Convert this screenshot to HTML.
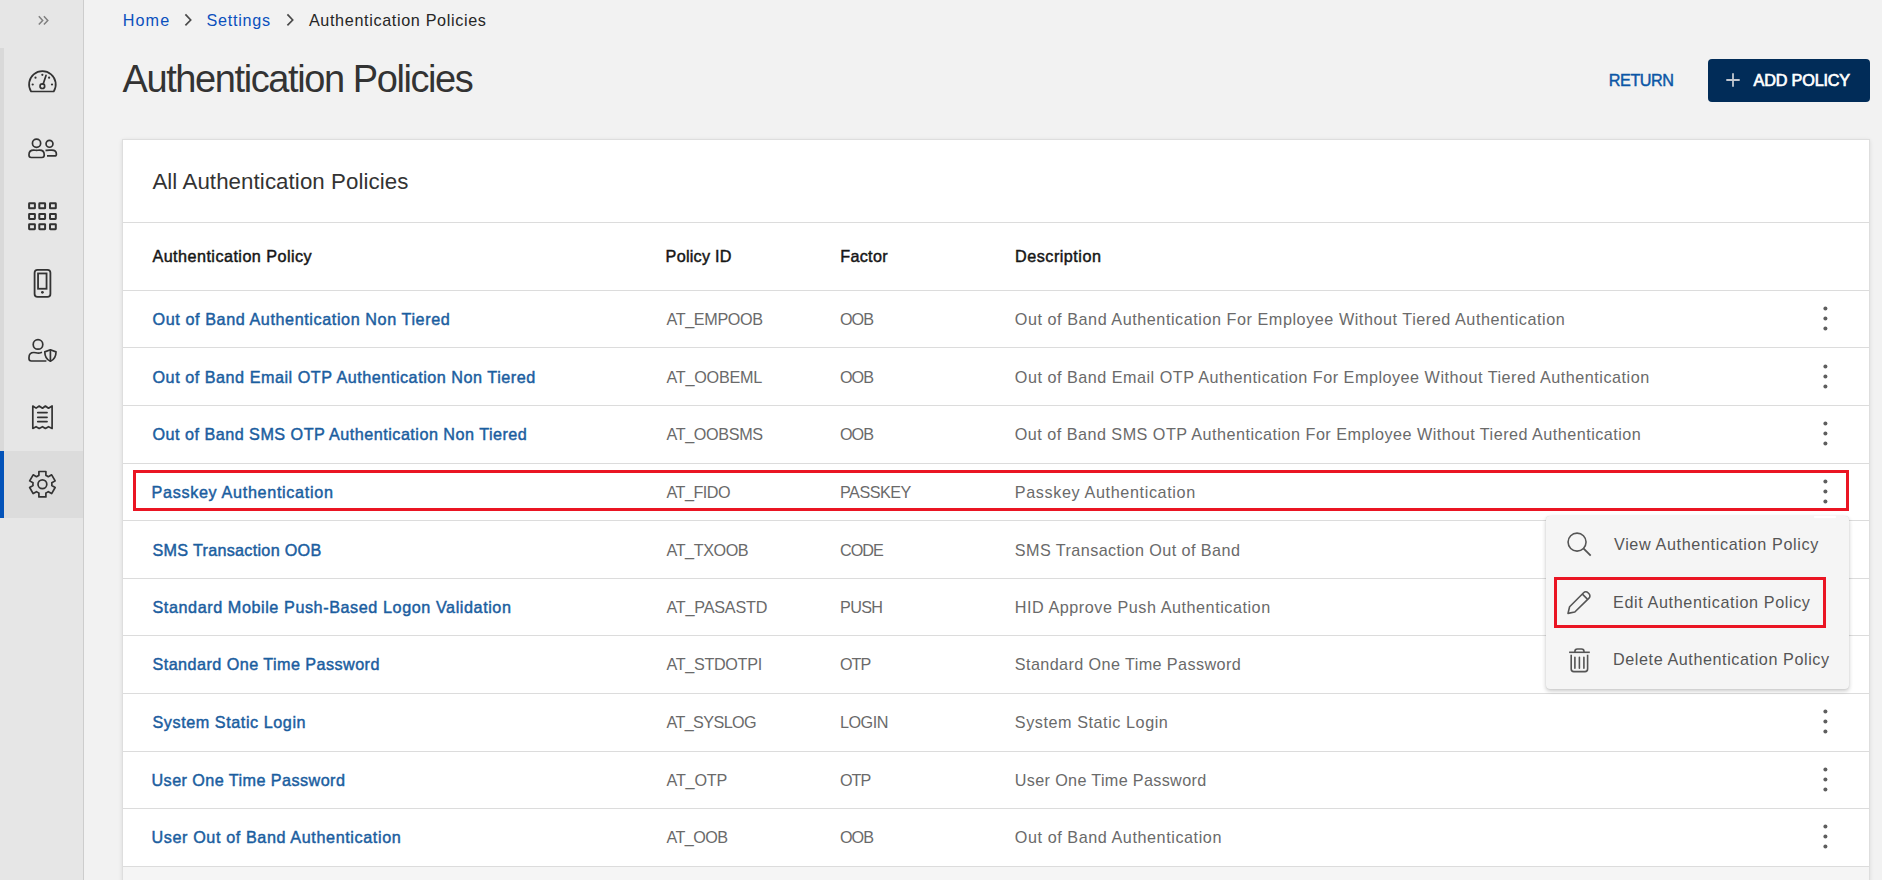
<!DOCTYPE html>
<html><head><meta charset="utf-8">
<style>
*{box-sizing:border-box;margin:0;padding:0}
html,body{width:1882px;height:880px;overflow:hidden;background:#f2f2f2;font-family:"Liberation Sans",sans-serif;position:relative}
.abs{position:absolute}
.t{position:absolute;white-space:nowrap;line-height:40px}
#side{position:absolute;left:0;top:0;width:84px;height:880px;background:#e6e6e6;border-right:1px solid #cdcdcd}
#strip{position:absolute;left:0;top:48px;width:4px;height:403px;background:#d9d9d9}
#sel{position:absolute;left:0;top:451px;width:83px;height:67px;background:#dcdcdc}
#selbar{position:absolute;left:0;top:451px;width:4px;height:67px;background:#0353b9}
.ico{position:absolute;overflow:visible}
#add{position:absolute;left:1708px;top:59px;width:162px;height:43px;background:#012c58;border-radius:4px}
#card{position:absolute;left:122px;top:139px;width:1748px;height:760px;background:#fff;border:1px solid #dedede;box-shadow:0 1px 4px rgba(0,0,0,.10)}
.hline{position:absolute;left:123px;width:1746px;height:1px;background:#dcdcdc}
.dots{position:absolute;left:1823px;width:4px}
.dots i{display:block;width:4px;height:4px;border-radius:2px;background:#676767;margin-bottom:6px}
#menu{position:absolute;left:1546px;top:516px;width:303px;height:173px;background:#f5f5f5;border-radius:4px;box-shadow:0 2px 4px rgba(0,0,0,.22),0 0 1px rgba(0,0,0,.15)}
.red{position:absolute;border:3px solid #ea1523}
</style></head><body>
<div id="side"></div>
<div id="strip"></div>
<div id="sel"></div>
<div id="selbar"></div>
<svg class="ico" style="left:36px;top:13px" width="16" height="15" viewBox="0 0 16 15"><path d="M2.8 3.2L6.7 7.4L2.8 11.6M7.9 3.2L11.8 7.4L7.9 11.6" fill="none" stroke="#808080" stroke-width="1.5"/></svg>
<svg class="ico" style="left:26px;top:66px" width="32" height="30" viewBox="0 0 32 30"><g fill="none" stroke="#333" stroke-width="1.7" stroke-linecap="round" stroke-linejoin="round"><path d="M5.09 25.5 A13.35 13.35 0 1 1 27.71 25.5 Z"/><circle cx="16.35" cy="20.2" r="2.3"/><path d="M17.1 18.2 L20 9.4"/></g><g fill="#333"><circle cx="16.35" cy="8.8" r="1.1"/><circle cx="9.5" cy="11.7" r="1.1"/><circle cx="23.1" cy="11.7" r="1.1"/><circle cx="6.7" cy="18.5" r="1.1"/><circle cx="26" cy="18.5" r="1.1"/></g></svg>
<svg class="ico" style="left:26px;top:136px" width="33" height="25" viewBox="0 0 33 25"><g fill="none" stroke="#333" stroke-width="1.7" stroke-linejoin="round"><circle cx="10.55" cy="7.2" r="4.1"/><path d="M3 19.3 V18.6 C3 15.6 5 14.1 7.6 14.1 C9 14.1 9.6 14.4 10.6 14.4 C11.6 14.4 12.2 14.1 13.6 14.1 C16.2 14.1 18.2 15.6 18.2 18.6 V19.3 Q18.2 21.5 16 21.5 H5.2 Q3 21.5 3 19.3 Z"/><circle cx="23.5" cy="7.8" r="3.45"/><path d="M19.5 14.4 C20.5 14.4 21.5 14.2 23.5 14.2 H25.8 C28.6 14.2 30.4 15.9 30.4 18.2 Q30.4 19.9 28.6 19.9 H21"/></g></svg>
<svg class="ico" style="left:26px;top:200px" width="33" height="32" viewBox="0 0 33 32"><g fill="none" stroke="#333" stroke-width="2"><rect x="3.1" y="3.3" width="5.8" height="5" rx="0.4"/><rect x="13.3" y="3.3" width="5.8" height="5" rx="0.4"/><rect x="24.0" y="3.3" width="5.8" height="5" rx="0.4"/><rect x="3.1" y="13.9" width="5.8" height="5" rx="0.4"/><rect x="13.3" y="13.9" width="5.8" height="5" rx="0.4"/><rect x="24.0" y="13.9" width="5.8" height="5" rx="0.4"/><rect x="3.1" y="24.2" width="5.8" height="5" rx="0.4"/><rect x="13.3" y="24.2" width="5.8" height="5" rx="0.4"/><rect x="24.0" y="24.2" width="5.8" height="5" rx="0.4"/></g></svg>
<svg class="ico" style="left:32px;top:268px" width="21" height="31" viewBox="0 0 21 31"><g fill="none" stroke="#333" stroke-width="1.8"><rect x="2.6" y="1.8" width="15.8" height="27.1" rx="2.9"/><rect x="6.05" y="5.45" width="8.5" height="15.3"/></g><circle cx="10.4" cy="24.3" r="1.4" fill="#333"/></svg>
<svg class="ico" style="left:26px;top:337px" width="33" height="27" viewBox="0 0 33 27"><g fill="none" stroke="#333" stroke-width="1.7" stroke-linejoin="round"><circle cx="12" cy="7.4" r="4.8"/><path d="M20.4 24 H5.3 Q3 24 3 21.7 V20.5 C3 17.2 5.2 15.5 7.9 15.5 C9.4 15.5 10.4 16.1 12.3 16.1 C14 16.1 15 15.6 16 15.3"/><path d="M24.4 12.8 L30 14.9 C30 19.5 28.6 22.3 24.4 24.2 C20.2 22.3 18.8 19.5 18.8 14.9 Z"/><path d="M24.4 12.8 V24.2"/></g></svg>
<svg class="ico" style="left:31px;top:403px" width="23" height="28" viewBox="0 0 23 28"><g fill="none" stroke="#333" stroke-width="1.7" stroke-linejoin="round" stroke-linecap="round"><path d="M1.8 3 L5.1 5.1 L8.2 3 L11.5 5.2 L14.4 3 L17.5 5.2 L21.1 3 V25.4 L17.5 23.7 L14.4 25.4 L11.5 23.7 L8.2 25.4 L5.1 23.7 L1.8 25.4 Z"/><path d="M6.75 9.6 H16.05 M6.75 14.3 H16.05 M6.75 18.6 H16.05"/></g></svg>
<svg class="ico" style="left:25px;top:467px" width="35" height="35" viewBox="0 0 35 35"><g fill="none" stroke="#333" stroke-width="1.7" stroke-linejoin="round"><path d="M13.90 8.37 L13.90 4.50 L20.90 4.50 L20.90 8.37 A9.5 9.5 0 0 1 23.30 9.75 L26.65 7.82 L30.15 13.88 L26.80 15.82 A9.5 9.5 0 0 1 26.80 18.58 L30.15 20.52 L26.65 26.58 L23.30 24.65 A9.5 9.5 0 0 1 20.90 26.03 L20.90 29.90 L13.90 29.90 L13.90 26.03 A9.5 9.5 0 0 1 11.50 24.65 L8.15 26.58 L4.65 20.52 L8.00 18.58 A9.5 9.5 0 0 1 8.00 15.82 L4.65 13.88 L8.15 7.82 L11.50 9.75 A9.5 9.5 0 0 1 13.90 8.37 Z"/><circle cx="17.4" cy="17.2" r="4.4"/></g></svg>
<svg class="ico" style="left:180px;top:13px" width="14" height="15" viewBox="0 0 14 15"><path d="M5.4 1.3L10.7 7L5.4 12.45" fill="none" stroke="#4a4a4a" stroke-width="1.7"/></svg><svg class="ico" style="left:281.5px;top:13px" width="14" height="15" viewBox="0 0 14 15"><path d="M5.4 1.3L10.7 7L5.4 12.45" fill="none" stroke="#4a4a4a" stroke-width="1.7"/></svg>
<div id="add"></div>
<svg class="ico" style="left:1726px;top:73px" width="14" height="14" viewBox="0 0 14 14"><path d="M7 0.3V13.7M0.3 7H13.7" stroke="#c3c8d0" stroke-width="1.8"/></svg>
<div id="card"></div>
<div class="hline" style="top:222px"></div>
<div class="hline" style="top:290px"></div>
<svg class="ico" style="left:1815px;top:290px" width="20" height="57" viewBox="0 0 20 57"><g fill="#5e5e5e"><circle cx="10.4" cy="18.40" r="2"/><circle cx="10.4" cy="28.40" r="2"/><circle cx="10.4" cy="38.40" r="2"/></g></svg>
<div class="hline" style="top:347px"></div>
<svg class="ico" style="left:1815px;top:347px" width="20" height="57" viewBox="0 0 20 57"><g fill="#5e5e5e"><circle cx="10.4" cy="19.40" r="2"/><circle cx="10.4" cy="29.40" r="2"/><circle cx="10.4" cy="39.40" r="2"/></g></svg>
<div class="hline" style="top:405px"></div>
<svg class="ico" style="left:1815px;top:405px" width="20" height="57" viewBox="0 0 20 57"><g fill="#5e5e5e"><circle cx="10.4" cy="18.40" r="2"/><circle cx="10.4" cy="28.40" r="2"/><circle cx="10.4" cy="38.40" r="2"/></g></svg>
<div class="hline" style="top:463px"></div>
<svg class="ico" style="left:1815px;top:463px" width="20" height="57" viewBox="0 0 20 57"><g fill="#5e5e5e"><circle cx="10.4" cy="18.40" r="2"/><circle cx="10.4" cy="28.40" r="2"/><circle cx="10.4" cy="38.40" r="2"/></g></svg>
<div class="hline" style="top:520px"></div>
<div class="hline" style="top:578px"></div>
<div class="hline" style="top:635px"></div>
<div class="hline" style="top:693px"></div>
<svg class="ico" style="left:1815px;top:693px" width="20" height="57" viewBox="0 0 20 57"><g fill="#5e5e5e"><circle cx="10.4" cy="18.40" r="2"/><circle cx="10.4" cy="28.40" r="2"/><circle cx="10.4" cy="38.40" r="2"/></g></svg>
<div class="hline" style="top:751px"></div>
<svg class="ico" style="left:1815px;top:751px" width="20" height="57" viewBox="0 0 20 57"><g fill="#5e5e5e"><circle cx="10.4" cy="18.40" r="2"/><circle cx="10.4" cy="28.40" r="2"/><circle cx="10.4" cy="38.40" r="2"/></g></svg>
<div class="hline" style="top:808px"></div>
<svg class="ico" style="left:1815px;top:808px" width="20" height="57" viewBox="0 0 20 57"><g fill="#5e5e5e"><circle cx="10.4" cy="18.40" r="2"/><circle cx="10.4" cy="28.40" r="2"/><circle cx="10.4" cy="38.40" r="2"/></g></svg>
<div class="hline" style="top:866px"></div>
<div class="abs" style="left:123px;top:867px;width:1746px;height:30px;background:#f5f5f5"></div>
<div class="t" style="left:122.80px;top:-0.30px;font-size:16.2px;letter-spacing:1.067px;color:#0b50bd;">Home</div>
<div class="t" style="left:206.60px;top:-0.30px;font-size:16.2px;letter-spacing:0.714px;color:#0b50bd;">Settings</div>
<div class="t" style="left:308.90px;top:-0.30px;font-size:16.2px;letter-spacing:0.645px;color:#262626;">Authentication Policies</div>
<div class="t" style="left:122.50px;top:59.30px;font-size:38px;letter-spacing:-1.409px;color:#333333;">Authentication Policies</div>
<div class="t" style="left:1608.80px;top:59.90px;font-size:16.2px;letter-spacing:-0.440px;color:#0b56a6;-webkit-text-stroke:0.45px #0b56a6;">RETURN</div>
<div class="t" style="left:1753.50px;top:59.80px;font-size:16.2px;letter-spacing:-0.156px;color:#ffffff;-webkit-text-stroke:0.7px #ffffff;">ADD POLICY</div>
<div class="t" style="left:152.40px;top:161.90px;font-size:22.3px;letter-spacing:0.077px;color:#333333;">All Authentication Policies</div>
<div class="t" style="left:152.40px;top:236.40px;font-size:16.2px;letter-spacing:0.450px;color:#161616;-webkit-text-stroke:0.45px #161616;">Authentication Policy</div>
<div class="t" style="left:665.60px;top:236.40px;font-size:16.2px;letter-spacing:0.250px;color:#161616;-webkit-text-stroke:0.45px #161616;">Policy ID</div>
<div class="t" style="left:840.30px;top:236.40px;font-size:16.2px;letter-spacing:0.280px;color:#161616;-webkit-text-stroke:0.45px #161616;">Factor</div>
<div class="t" style="left:1015.00px;top:236.40px;font-size:16.2px;letter-spacing:0.500px;color:#161616;-webkit-text-stroke:0.45px #161616;">Description</div>
<div class="t" style="left:152.50px;top:299.00px;font-size:16.2px;letter-spacing:0.583px;color:#1b5e9f;-webkit-text-stroke:0.45px #1b5e9f;">Out of Band Authentication Non Tiered</div>
<div class="t" style="left:666.50px;top:299.00px;font-size:16.2px;letter-spacing:-0.375px;color:#6a6a6a;">AT_EMPOOB</div>
<div class="t" style="left:840.00px;top:299.00px;font-size:16.2px;letter-spacing:-1.000px;color:#6a6a6a;">OOB</div>
<div class="t" style="left:1014.80px;top:299.00px;font-size:16.2px;letter-spacing:0.544px;color:#6a6a6a;">Out of Band Authentication For Employee Without Tiered Authentication</div>
<div class="t" style="left:152.50px;top:357.00px;font-size:16.2px;letter-spacing:0.522px;color:#1b5e9f;-webkit-text-stroke:0.45px #1b5e9f;">Out of Band Email OTP Authentication Non Tiered</div>
<div class="t" style="left:666.50px;top:357.00px;font-size:16.2px;letter-spacing:-0.250px;color:#6a6a6a;">AT_OOBEML</div>
<div class="t" style="left:840.00px;top:357.00px;font-size:16.2px;letter-spacing:-1.000px;color:#6a6a6a;">OOB</div>
<div class="t" style="left:1014.80px;top:357.00px;font-size:16.2px;letter-spacing:0.500px;color:#6a6a6a;">Out of Band Email OTP Authentication For Employee Without Tiered Authentication</div>
<div class="t" style="left:152.50px;top:414.00px;font-size:16.2px;letter-spacing:0.477px;color:#1b5e9f;-webkit-text-stroke:0.45px #1b5e9f;">Out of Band SMS OTP Authentication Non Tiered</div>
<div class="t" style="left:666.50px;top:414.00px;font-size:16.2px;letter-spacing:-0.375px;color:#6a6a6a;">AT_OOBSMS</div>
<div class="t" style="left:840.00px;top:414.00px;font-size:16.2px;letter-spacing:-1.000px;color:#6a6a6a;">OOB</div>
<div class="t" style="left:1014.80px;top:414.00px;font-size:16.2px;letter-spacing:0.474px;color:#6a6a6a;">Out of Band SMS OTP Authentication For Employee Without Tiered Authentication</div>
<div class="t" style="left:151.50px;top:472.00px;font-size:16.2px;letter-spacing:0.667px;color:#1b5e9f;-webkit-text-stroke:0.45px #1b5e9f;">Passkey Authentication</div>
<div class="t" style="left:666.50px;top:472.00px;font-size:16.2px;letter-spacing:-0.500px;color:#6a6a6a;">AT_FIDO</div>
<div class="t" style="left:840.00px;top:472.00px;font-size:16.2px;letter-spacing:-0.500px;color:#6a6a6a;">PASSKEY</div>
<div class="t" style="left:1014.80px;top:472.00px;font-size:16.2px;letter-spacing:0.619px;color:#6a6a6a;">Passkey Authentication</div>
<div class="t" style="left:152.50px;top:530.00px;font-size:16.2px;letter-spacing:0.278px;color:#1b5e9f;-webkit-text-stroke:0.45px #1b5e9f;">SMS Transaction OOB</div>
<div class="t" style="left:666.50px;top:530.00px;font-size:16.2px;letter-spacing:-0.429px;color:#6a6a6a;">AT_TXOOB</div>
<div class="t" style="left:840.00px;top:530.00px;font-size:16.2px;letter-spacing:-1.000px;color:#6a6a6a;">CODE</div>
<div class="t" style="left:1014.80px;top:530.00px;font-size:16.2px;letter-spacing:0.423px;color:#6a6a6a;">SMS Transaction Out of Band</div>
<div class="t" style="left:152.50px;top:587.00px;font-size:16.2px;letter-spacing:0.571px;color:#1b5e9f;-webkit-text-stroke:0.45px #1b5e9f;">Standard Mobile Push-Based Logon Validation</div>
<div class="t" style="left:666.50px;top:587.00px;font-size:16.2px;letter-spacing:-0.222px;color:#6a6a6a;">AT_PASASTD</div>
<div class="t" style="left:840.00px;top:587.00px;font-size:16.2px;letter-spacing:-0.667px;color:#6a6a6a;">PUSH</div>
<div class="t" style="left:1014.80px;top:587.00px;font-size:16.2px;letter-spacing:0.533px;color:#6a6a6a;">HID Approve Push Authentication</div>
<div class="t" style="left:152.50px;top:644.00px;font-size:16.2px;letter-spacing:0.440px;color:#1b5e9f;-webkit-text-stroke:0.45px #1b5e9f;">Standard One Time Password</div>
<div class="t" style="left:666.50px;top:644.00px;font-size:16.2px;letter-spacing:-0.333px;color:#6a6a6a;">AT_STDOTPI</div>
<div class="t" style="left:840.00px;top:644.00px;font-size:16.2px;letter-spacing:-1.000px;color:#6a6a6a;">OTP</div>
<div class="t" style="left:1014.80px;top:644.00px;font-size:16.2px;letter-spacing:0.400px;color:#6a6a6a;">Standard One Time Password</div>
<div class="t" style="left:152.50px;top:702.00px;font-size:16.2px;letter-spacing:0.556px;color:#1b5e9f;-webkit-text-stroke:0.45px #1b5e9f;">System Static Login</div>
<div class="t" style="left:666.50px;top:702.00px;font-size:16.2px;letter-spacing:-0.625px;color:#6a6a6a;">AT_SYSLOG</div>
<div class="t" style="left:840.00px;top:702.00px;font-size:16.2px;letter-spacing:-0.500px;color:#6a6a6a;">LOGIN</div>
<div class="t" style="left:1014.80px;top:702.00px;font-size:16.2px;letter-spacing:0.556px;color:#6a6a6a;">System Static Login</div>
<div class="t" style="left:151.50px;top:760.00px;font-size:16.2px;letter-spacing:0.429px;color:#1b5e9f;-webkit-text-stroke:0.45px #1b5e9f;">User One Time Password</div>
<div class="t" style="left:666.50px;top:760.00px;font-size:16.2px;letter-spacing:-0.200px;color:#6a6a6a;">AT_OTP</div>
<div class="t" style="left:840.00px;top:760.00px;font-size:16.2px;letter-spacing:-1.000px;color:#6a6a6a;">OTP</div>
<div class="t" style="left:1014.80px;top:760.00px;font-size:16.2px;letter-spacing:0.333px;color:#6a6a6a;">User One Time Password</div>
<div class="t" style="left:151.50px;top:817.00px;font-size:16.2px;letter-spacing:0.600px;color:#1b5e9f;-webkit-text-stroke:0.45px #1b5e9f;">User Out of Band Authentication</div>
<div class="t" style="left:666.50px;top:817.00px;font-size:16.2px;letter-spacing:-0.600px;color:#6a6a6a;">AT_OOB</div>
<div class="t" style="left:840.00px;top:817.00px;font-size:16.2px;letter-spacing:-1.000px;color:#6a6a6a;">OOB</div>
<div class="t" style="left:1014.80px;top:817.00px;font-size:16.2px;letter-spacing:0.560px;color:#6a6a6a;">Out of Band Authentication</div>
<div id="menu"></div>
<div class="abs" style="left:1814px;top:516px;width:22px;height:2px;border-radius:1px;background:#fff;box-shadow:0 0 1px #fff"></div>
<svg class="ico" style="left:1565px;top:531px" width="28" height="28" viewBox="0 0 28 28"><g fill="none" stroke="#555" stroke-width="1.6"><circle cx="12.06" cy="11.1" r="9"/><path d="M18.4 17.4 L25.7 24.7" stroke-width="1.8"/></g></svg>
<svg class="ico" style="left:1565px;top:588px" width="28" height="28" viewBox="0 0 28 28"><g fill="none" stroke="#555" stroke-width="1.6" stroke-linejoin="round"><path d="M3 25.4 L4.6 18.7 L18.6 4.7 a3.1 3.1 0 0 1 4.4 0 l1 1 a3.1 3.1 0 0 1 0 4.4 L9.8 24 Z"/><path d="M17.4 6.1 L22.4 11.1"/></g></svg>
<svg class="ico" style="left:1565px;top:646px" width="28" height="28" viewBox="0 0 28 28"><g fill="none" stroke="#555" stroke-width="1.6" stroke-linejoin="round"><path d="M4.1 6.3 H24.8"/><path d="M9.9 6.3 V5.5 a2.5 2.5 0 0 1 2.5 -2.5 h4.1 a2.5 2.5 0 0 1 2.5 2.5 V6.3"/><path d="M6.2 8.8 V23 a2.6 2.6 0 0 0 2.6 2.6 h11.2 a2.6 2.6 0 0 0 2.6 -2.6 V8.8"/><path d="M9.9 11.3 V22.3 M14.4 11.3 V22.3 M18.9 11.3 V22.3" stroke-linecap="round"/></g></svg>
<div class="t" style="left:1614.00px;top:524.30px;font-size:16.2px;letter-spacing:0.624px;color:#555555;">View Authentication Policy</div>
<div class="t" style="left:1613.00px;top:581.90px;font-size:16.2px;letter-spacing:0.608px;color:#555555;">Edit Authentication Policy</div>
<div class="t" style="left:1613.00px;top:639.10px;font-size:16.2px;letter-spacing:0.570px;color:#555555;">Delete Authentication Policy</div>
<div class="red" style="left:133px;top:470px;width:1716px;height:41px"></div>
<div class="red" style="left:1554px;top:577px;width:272px;height:51px"></div>
</body></html>
